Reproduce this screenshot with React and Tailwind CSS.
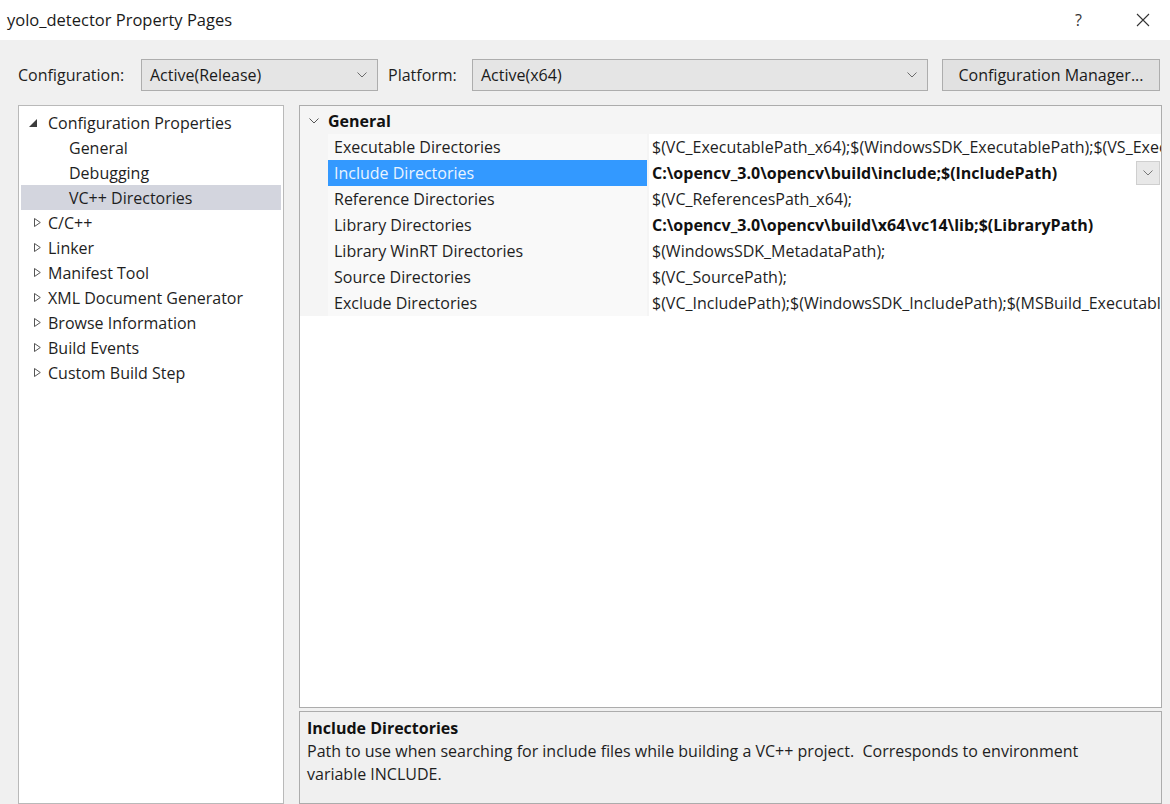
import React from "react";

const FONT = { fontFamily: '"Open Sans", "Noto Sans", "Liberation Sans", sans-serif' };

function Chevron({ className = "" }) {
  return (
    <svg width="10" height="6" viewBox="0 0 10 6" className={className}>
      <path d="M0.5 0.5 L5 5 L9.5 0.5" fill="none" stroke="currentColor" strokeWidth="1" />
    </svg>
  );
}

function Expanded() {
  return (
    <svg width="8" height="8" viewBox="0 0 8 8">
      <path d="M8 0 L8 8 L0 8 Z" fill="#3c3c3c" />
    </svg>
  );
}

function Collapsed() {
  return (
    <svg width="7" height="9" viewBox="0 0 7 9">
      <path d="M0.5 0.5 L6.3 4.5 L0.5 8.5 Z" fill="none" stroke="#555" strokeWidth="1" />
    </svg>
  );
}

function Combo({ label, width }) {
  return (
    <div
      className="h-[32px] flex items-center border border-[#adadad] bg-[#e5e5e5] pl-[8px] pr-[10px] text-[16px] text-[#1a1a1a]"
      style={{ width }}
    >
      <span className="flex-1">{label}</span>
      <Chevron className="text-[#6b6b6b]" />
    </div>
  );
}

const tree = [
  { t: "General", lvl: 1 },
  { t: "Debugging", lvl: 1 },
  { t: "VC++ Directories", lvl: 1, sel: true },
  { t: "C/C++", lvl: 0 },
  { t: "Linker", lvl: 0 },
  { t: "Manifest Tool", lvl: 0 },
  { t: "XML Document Generator", lvl: 0 },
  { t: "Browse Information", lvl: 0 },
  { t: "Build Events", lvl: 0 },
  { t: "Custom Build Step", lvl: 0 },
];

const props = [
  ["Executable Directories", "$(VC_ExecutablePath_x64);$(WindowsSDK_ExecutablePath);$(VS_ExecutablePath);$(MSBuild_ExecutablePath);$(FxCopDir);$(PATH);", false],
  ["Include Directories", "C:\\opencv_3.0\\opencv\\build\\include;$(IncludePath)", true, true],
  ["Reference Directories", "$(VC_ReferencesPath_x64);", false],
  ["Library Directories", "C:\\opencv_3.0\\opencv\\build\\x64\\vc14\\lib;$(LibraryPath)", true],
  ["Library WinRT Directories", "$(WindowsSDK_MetadataPath);", false],
  ["Source Directories", "$(VC_SourcePath);", false],
  ["Exclude Directories", "$(VC_IncludePath);$(WindowsSDK_IncludePath);$(MSBuild_ExecutablePath);$(VC_LibraryPath_x64);", false],
];

export default function App() {
  return (
    <div className="w-[1170px] h-[804px] overflow-hidden bg-[#f0f0f0] flex flex-col text-[#1e1e1e]" style={FONT}>
      {/* title bar */}
      <div className="h-[40px] shrink-0 bg-white flex items-center pl-[7px] pr-[20px]">
        <span className="flex-1 text-[16.5px] text-[#1a1a1a]">yolo_detector Property Pages</span>
        <span className="text-[16px] text-[#333] mr-[54px]">?</span>
        <svg width="14" height="14" viewBox="0 0 14 14">
          <path d="M1 1 L13 13 M13 1 L1 13" stroke="#333" strokeWidth="1.1" />
        </svg>
      </div>

      {/* configuration toolbar */}
      <div className="mt-[19px] h-[32px] shrink-0 flex items-center pl-[18px]">
        <span className="w-[123px] text-[16px]">Configuration:</span>
        <Combo label="Active(Release)" width={237} />
        <span className="ml-[10px] w-[84px] text-[16px]">Platform:</span>
        <Combo label="Active(x64)" width={456} />
        <button className="ml-[14px] h-[32px] w-[218px] border border-[#adadad] bg-[#e1e1e1] text-[16px] text-[#1a1a1a]">
          Configuration Manager...
        </button>
      </div>

      {/* main area */}
      <div className="mt-[14px] flex-1 flex pl-[18px] pr-[8px] gap-[15px] min-h-0">
        {/* tree */}
        <div className="w-[266px] shrink-0 border border-[#b9b9b9] bg-white pt-[4px] px-[2px] text-[16px]">
          <div className="h-[25px] flex items-center">
            <span className="w-[27px] flex justify-end pr-[11px]"><Expanded /></span>
            <span>Configuration Properties</span>
          </div>
          {tree.map((n) => (
            <div key={n.t} className={`h-[25px] flex items-center ${n.sel ? "bg-[#d3d5de]" : ""}`}>
              {n.lvl === 1 ? (
                <span className="pl-[48px]">{n.t}</span>
              ) : (
                <>
                  <span className="w-[27px] flex justify-end pr-[7px]"><Collapsed /></span>
                  <span>{n.t}</span>
                </>
              )}
            </div>
          ))}
        </div>

        {/* property grid + description */}
        <div className="flex-1 flex flex-col min-w-0">
          <div className="h-[603px] shrink-0 border border-[#acacac] bg-white text-[16px] overflow-hidden">
            <div className="bg-[#f5f5f5] pt-[2px]">
              <div className="h-[26px] flex items-center">
                <span className="w-[28px] flex justify-center"><Chevron className="text-[#555]" /></span>
                <span className="font-bold text-[#111]">General</span>
              </div>
              {props.map(([name, val, bold, sel]) => (
                <div key={name} className="h-[26px] flex">
                  <div className="w-[28px] shrink-0" />
                  <div
                    className={`w-[319px] shrink-0 flex items-center pl-[6px] mr-[2px] ${
                      sel ? "bg-[#3399ff] text-[#eaf4ff]" : "bg-[#f9f9f9]"
                    }`}
                  >
                    {name}
                  </div>
                  <div className="flex-1 min-w-0 flex items-center bg-white">
                    <span className={`flex-1 min-w-0 whitespace-nowrap overflow-hidden pl-[3px] ${bold ? "font-bold text-[#111]" : ""}`}>
                      {val}
                    </span>
                    {sel && (
                      <span className="w-[24px] h-[24px] mr-[1px] flex items-center justify-center border border-[#cfcfcf] bg-[#e8e8e8]">
                        <Chevron className="text-[#777]" />
                      </span>
                    )}
                  </div>
                </div>
              ))}
            </div>
          </div>
          <div className="mt-[3px] flex-1 border border-[#acacac] bg-[#f0f0f0] px-[7px] pt-[5px] text-[16px] leading-[23px]">
            <div className="font-bold text-[#111]">Include Directories</div>
            <div className="whitespace-pre">
              {"Path to use when searching for include files while building a VC++ project.  Corresponds to environment\nvariable INCLUDE."}
            </div>
          </div>
        </div>
      </div>
    </div>
  );
}
